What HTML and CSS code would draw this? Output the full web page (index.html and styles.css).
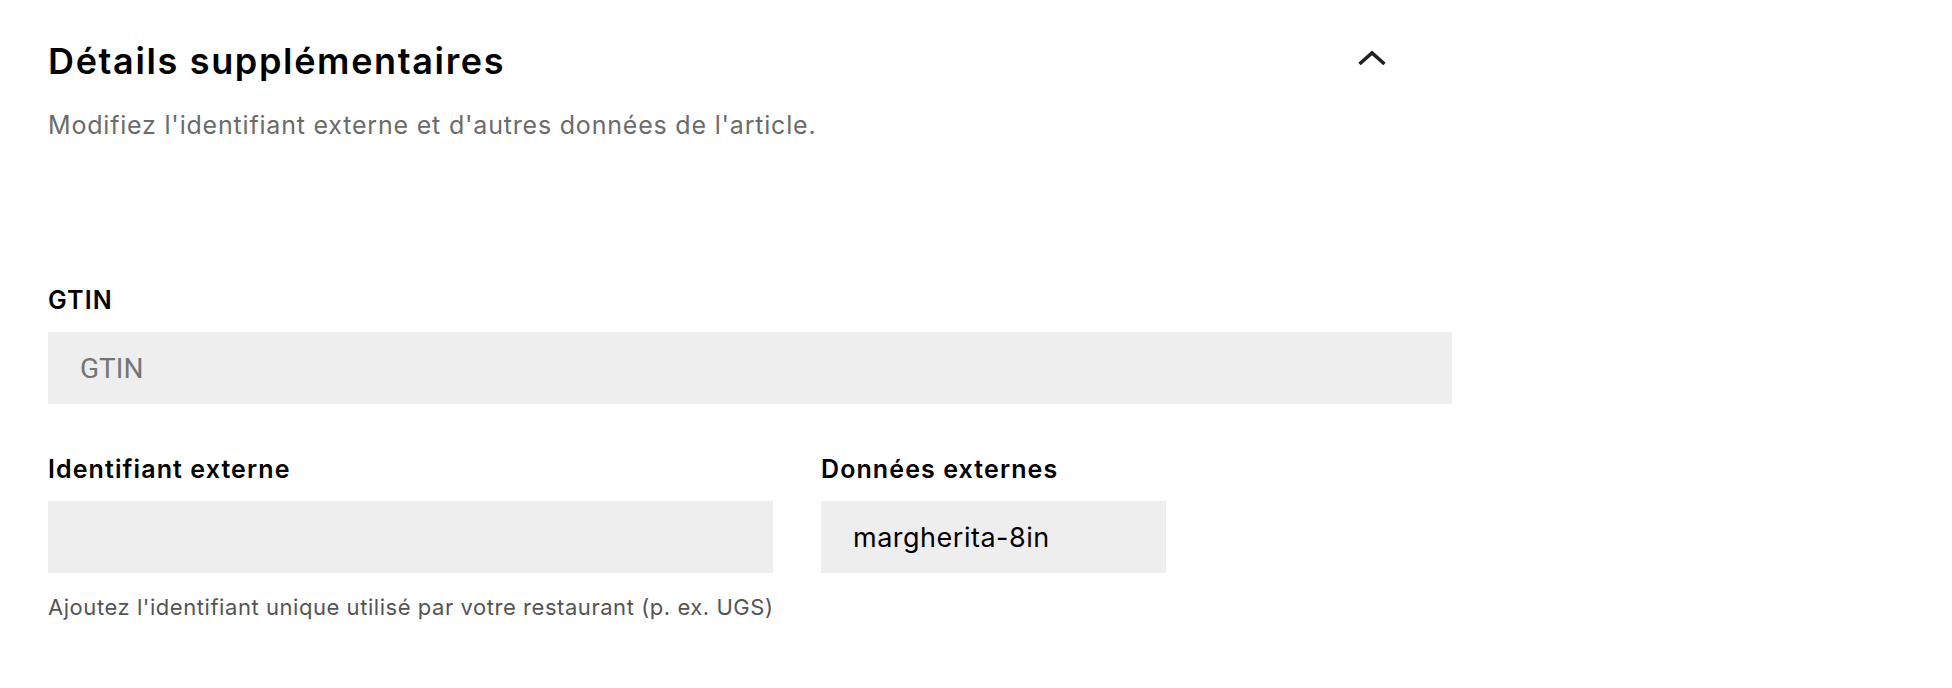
FILE: index.html
```html
<!DOCTYPE html>
<html lang="fr">
<head>
<meta charset="utf-8">
<title>Détails supplémentaires</title>
<link rel="stylesheet" href="styles.css">
</head>
<body>
<section class="panel">
  <div class="header">
    <h2 class="title">Détails supplémentaires</h2>
    <button class="toggle" aria-label="Réduire">
      <svg width="28" height="16" viewBox="0 0 28 16"><polyline points="1.5,14 14,3 26.5,14" fill="none" stroke="#222" stroke-width="3.6" stroke-linejoin="miter"/></svg>
    </button>
  </div>
  <p class="subtitle">Modifiez l'identifiant externe et d'autres données de l'article.</p>

  <div class="field field-full">
    <label class="label" for="gtin">GTIN</label>
    <input class="input" id="gtin" type="text" placeholder="GTIN">
  </div>

  <div class="row">
    <div class="field field-ext">
      <label class="label" for="extid">Identifiant externe</label>
      <input class="input" id="extid" type="text">
      <p class="hint">Ajoutez l'identifiant unique utilisé par votre restaurant (p. ex. UGS)</p>
    </div>
    <div class="field field-data">
      <label class="label" for="extdata">Données externes</label>
      <input class="input" id="extdata" type="text" value="margherita-8in">
    </div>
  </div>
</section>
</body>
</html>
```

FILE: styles.css
```css
* { box-sizing: border-box; }
html, body { margin: 0; padding: 0; background: #fff; }
body { font-family: Inter, Roboto, "Noto Sans", sans-serif; color: #000; }

.panel {
  width: 1500px;
  padding: 41px 48px 0 48px;
}

.header {
  display: flex;
  align-items: center;
  width: 1404px;
}
.title {
  flex: 1;
  margin: 0;
  font-size: 36px;
  line-height: 40px;
  font-weight: 600;
  letter-spacing: 1.65px;
}
.toggle {
  border: 0;
  background: none;
  padding: 0;
  margin-right: 66px;
  width: 28px;
  height: 16px;
  display: flex;
  align-items: center;
  justify-content: center;
  transform: translateY(-3px);
}
.toggle svg { display: block; }

.subtitle {
  margin: 28px 0 0 0;
  font-size: 25px;
  line-height: 32px;
  letter-spacing: 0.8px;
  color: #6b6b6b;
}

.field { display: flex; flex-direction: column; }
.field-full { width: 1404px; margin-top: 143px; }

.label {
  font-size: 25px;
  line-height: 32px;
  font-weight: 600;
  letter-spacing: 1.1px;
}

.input {
  margin-top: 16px;
  height: 72px;
  border: 0;
  outline: none;
  background: #eeeeee;
  padding: 0 32px;
  font-family: inherit;
  font-size: 27px;
  letter-spacing: 0.5px;
  color: #000;
}
.input::placeholder {
  color: #757575;
  font-family: Roboto, "Liberation Sans", sans-serif;
  font-size: 28px;
  letter-spacing: 0;
}

.row {
  display: flex;
  gap: 48px;
  margin-top: 49px;
}
.field-ext { width: 725px; }
.field-data { width: 345px; }

.hint {
  margin: 20px 0 0 0;
  font-size: 22px;
  line-height: 28px;
  letter-spacing: 0.55px;
  white-space: nowrap;
  color: #545454;
}
```
